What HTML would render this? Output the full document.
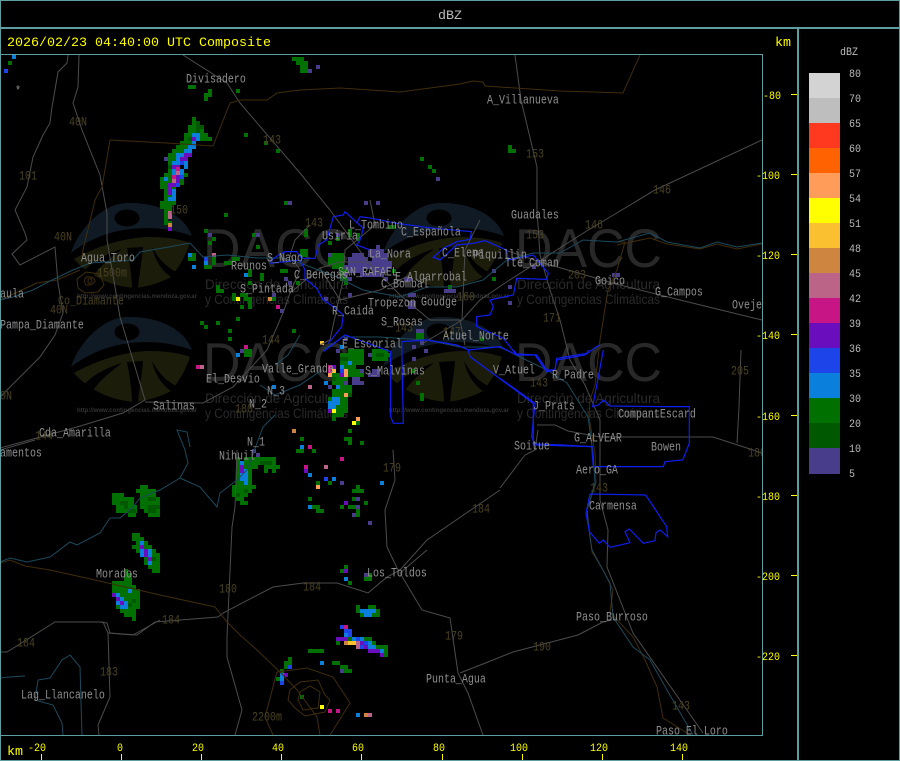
<!DOCTYPE html>
<html><head><meta charset="utf-8"><title>dBZ</title>
<style>
html,body{margin:0;padding:0;background:#000;width:900px;height:761px;overflow:hidden}
svg{display:block}
text{font-family:"Liberation Mono",monospace;font-size:10px}
.l text,.n text{transform-box:fill-box;transform-origin:0 80%;transform:scaleY(1.25)}
.a text,.k text{transform-box:fill-box;transform-origin:0 80%;transform:scaleY(1.1)}
.l text{fill:#8e8e8e}
.n text{fill:#4a4222}
.a text{fill:#ffff00}
.t{fill:#ffff00;font-size:13.33px}
.k text{fill:#bbb}
.s{fill:#bbb;font-size:13.33px}
.w{font-family:"Liberation Sans",sans-serif}
.r path{fill:none;stroke-width:4;shape-rendering:crispEdges}
.g{fill:none;stroke:#4c4c4c;stroke-width:1}
.b{fill:none;stroke:#3f2d0c;stroke-width:1}
.v{fill:none;stroke:#1c4a5c;stroke-width:1}
.u{fill:none;stroke:#0f1ef0}
</style></head><body>
<svg width="900" height="761" viewBox="0 0 900 761" xmlns="http://www.w3.org/2000/svg">
<defs>
<clipPath id="m"><rect x="1" y="55" width="761" height="680"/></clipPath>
<g id="logo">
<path d="M71 367C80 340 105 317 127 317C160 316 185 330 192 350C170 342 150 341 130 343C105 346 85 356 71 367Z" fill="#0f1a24"/>
<ellipse cx="127" cy="332" rx="12.5" ry="8.5" fill="#000"/>
<path d="M74 373C100 358 130 351 150 351C165 351 180 353 190 357C185 372 178 382 171 391C158 398 145 401 135 402C120 401 105 397 90 387C83 382 78 378 74 373Z" fill="#1c1c0b"/>
<path d="M122 363C105 368 90 377 83 386L92 392C98 382 110 372 122 363ZM127 362C130 378 132 392 132 402L138 402C139 390 142 375 143 361ZM152 361C155 375 162 385 171 391L176 386C165 380 158 372 152 361Z" fill="#000"/>
<text x="203" y="381" class="w" style="font-size:55px" textLength="147" lengthAdjust="spacingAndGlyphs" fill="#282828">DACC</text>
<text x="205" y="403" class="w" style="font-size:14px" textLength="143" lengthAdjust="spacingAndGlyphs" fill="#2a2a2a">Dirección de Agricultura</text>
<text x="205" y="418" class="w" style="font-size:14px" textLength="143" lengthAdjust="spacingAndGlyphs" fill="#2a2a2a">y Contingencias Climáticas</text>
<text x="77" y="412" class="w" style="font-size:6px;font-weight:bold" textLength="120" lengthAdjust="spacingAndGlyphs" fill="#333">http://www.contingencias.mendoza.gov.ar</text>
</g>
</defs>
<rect width="900" height="761" fill="#000"/>
<g clip-path="url(#m)">
<use href="#logo"/>
<use href="#logo" x="312"/>
<use href="#logo" y="-114"/>
<use href="#logo" x="312" y="-114"/>

<!-- radar -->
<g class="r">
<path stroke="#007000" d="M292 59h12M296 63h12M300 67h8M300 71h8M8 63h4M188 87h8M208 91h4M204 95h8M204 99h4M236 91h4M244 135h4M264 143h4M276 151h4M284 203h4M224 215h4M204 231h4M212 239h4M208 243h4M252 235h4M256 247h4
M192 119h4M192 123h8M188 127h16M188 131h16M184 135h24M184 139h28M180 143h16M176 147h20M172 151h20M168 155h16M168 159h12M168 163h12M168 167h12M168 171h16M164 175h24M160 179h24M160 183h24M160 187h16M164 191h12M164 195h12M164 199h12M160 203h16M160 207h12M164 211h8M164 215h4M164 219h4M164 223h8
M192 255h4M188 259h8M204 267h8M212 259h4M212 263h4M224 263h8M232 259h8M248 271h4M248 275h4M260 275h4M260 279h4M280 271h8M248 283h4M216 287h4M216 291h8M232 295h4M232 299h4M240 295h8M244 299h8M248 303h4M248 307h4M240 307h4M272 299h4M200 323h4M204 327h4M216 323h4M236 319h4M228 331h4M228 339h4M292 331h4M244 351h8M244 355h8
M296 283h4M300 251h8M300 255h8M304 231h4M304 235h4M328 243h4M336 239h4M348 231h4M348 235h4M356 235h4M356 239h4M388 227h8M328 255h16M328 259h16M328 263h16M332 267h12M340 271h8M340 275h8M340 279h8M344 283h4M392 271h4M448 287h4M492 279h4M416 335h8M416 339h8M416 383h4M420 395h4M420 399h4M412 371h4M480 339h4M508 147h4M508 151h8M420 159h4M428 167h4M432 171h4
M348 351h16M340 355h24M344 359h20M372 351h16M372 355h18M372 359h16M340 363h24M340 367h16M348 371h16M332 375h32M332 379h16M332 383h12M340 387h12M332 391h20M332 395h20M328 399h20M328 403h20M336 407h12M336 411h12M332 415h12M332 419h4M356 423h4M348 431h4M344 439h8M348 443h4M360 443h4M300 439h4
M236 459h4M244 459h32M236 463h40M236 467h22M264 467h16M236 471h16M264 471h4M272 471h4M236 475h16M236 479h16M236 483h16M232 487h24M232 491h20M232 495h16M236 499h8M240 503h8
M112 495h12M112 499h22M112 503h22M116 507h21M116 511h21M128 515h8M140 487h8M136 491h20M140 495h16M140 499h20M140 503h20M140 507h20M144 511h16M148 515h12
M132 535h8M132 539h12M136 543h12M132 547h20M136 551h20M140 555h20M144 559h16M144 563h16M148 567h12M152 571h8
M124 571h4M124 575h8M124 579h8M112 583h20M112 587h24M112 591h28M116 595h24M116 599h24M116 603h24M116 607h24M120 611h16M124 615h12M132 619h4
M296 451h8M312 451h4M316 483h4M328 483h4M356 487h4M352 491h12M308 499h4M352 499h4M364 503h4M312 507h8M340 507h4M348 507h8M316 511h8M356 511h4M356 515h4M344 567h4M340 571h4M348 583h4M368 575h4M364 579h8
M356 607h4M368 607h8M356 611h4M376 611h4M360 615h4M372 615h8M348 639h4M364 639h8M336 643h4M372 643h4M376 647h12M384 651h4M384 655h4M308 651h16M332 663h8M340 667h8M344 671h8M288 659h4M284 663h8M284 667h4M280 671h4M276 679h4M300 697h4"/>
<path stroke="#005800" d="M196 123h4M196 127h8M196 131h4M188 139h4M168 167h4M340 375h8M344 395h8M120 503h8M124 507h4M148 499h8M148 507h12M148 511h8M244 491h4M260 463h12M128 511h8M132 601h4M128 605h4M340 359h8M376 355h8M356 379h4M332 379h4M308 651h0M348 663h0M148 559h8M236 495h4"/>
<path stroke="#483d8b" d="M316 67h4M308 71h4M164 159h4M288 203h4M208 235h4M256 235h4M272 295h4M280 311h4M240 351h4M284 279h4M288 283h4M364 203h4M376 203h4M336 235h4M328 255h4M376 247h4M368 251h16M352 255h12M368 255h20M348 259h20M372 259h16M348 263h44M344 267h48M348 271h16M372 271h16M360 275h24M348 279h4M384 279h4M404 279h8M344 275h4M348 295h4M324 299h4M444 291h12M408 295h8M408 303h8M408 307h8M492 271h4M508 287h4M508 303h4M532 267h4M612 275h8M436 179h4M416 331h8M420 343h4M412 347h4M424 351h4M412 359h4M336 351h4M344 339h4M368 355h4M360 371h4M372 371h8M368 375h12M372 379h0M352 379h8M344 383h4M352 383h12M328 387h4M340 367h0M252 451h4M256 455h4M340 483h4M356 499h4M356 507h4M352 515h4M368 523h4M364 575h4M340 671h4"/>
<path stroke="#0a80dc" d="M12 57h4M192 135h8M196 139h4M192 143h4M188 147h8M184 151h8M176 155h8M176 159h4M172 163h8M184 163h4M184 167h4M172 171h4M180 171h4M172 175h4M180 175h4M164 179h4M172 191h4M172 195h4M168 199h8M188 255h4M192 267h4M204 263h4M244 275h4M236 355h4M272 387h4M340 347h4M348 363h4M340 367h4M324 383h4M336 387h4M344 379h0M332 399h8M328 403h12M328 407h8M300 447h4M240 463h4M244 471h4M240 475h8M240 479h8M244 483h4M128 591h4M116 595h4M120 599h4M124 603h4M120 607h8M116 603h4M140 543h4M140 551h4M148 551h4M140 555h4M148 555h4M148 559h0M148 563h4M308 475h4M332 479h4M380 483h4M308 507h4M344 579h4M360 611h16M364 615h8M352 639h4M360 639h4M344 635h4M368 643h4M368 647h8M380 651h4M320 663h4M280 675h4M280 679h4M356 715h4"/>
<path stroke="#1c44e8" d="M4 71h4M180 163h4M180 177h4M204 259h4M176 185h4M340 371h4M324 479h4M340 627h4M344 631h8M348 635h4M356 639h4M364 643h4M360 647h4M288 667h4M280 683h4"/>
<path stroke="#6a0dbd" d="M192 139h4M184 155h8M180 159h8M172 167h8M172 185h4M168 185h4M168 189h4M168 193h4M176 177h4M176 181h4M168 229h4M332 367h4M340 375h4M328 411h4M240 467h4M240 471h4M140 547h4M144 551h4M144 555h4M148 559h4M112 595h4M116 599h4M120 603h4M304 471h4M344 503h4M344 571h4M336 639h12M360 643h4M364 647h4M368 651h12M380 655h4M284 675h4"/>
<path stroke="#c71585" d="M176 169h4M172 177h4M328 367h4M328 371h4M244 347h4M276 307h4M196 367h4M240 463h0M340 459h4M304 467h4M308 447h4M344 627h4M328 711h4M336 711h4"/>
<path stroke="#bc6488" d="M176 173h4M172 181h4M168 213h4M168 217h4M212 255h4M200 367h4M308 387h4M324 467h4M356 643h4M356 647h4M368 715h4"/>
<path stroke="#cd853f" d="M168 225h4M268 299h4M292 431h4M344 643h4M364 715h4"/>
<path stroke="#fac030" d="M320 343h4M332 371h4M348 643h8"/>
<path stroke="#ff9c5a" d="M328 375h4M344 371h4M344 375h4M344 395h4M356 419h4M316 487h4"/>
<path stroke="#ffff00" d="M236 299h4M332 411h4M352 423h4M320 707h4"/>
</g>

<!-- roads -->
<g class="g">
<path d="M68 55L67 63L58 72L52 107L50 123L43 135L33 157L27 187L15 210L25 233L27 240L12 254L20 265L55 247L58 283L63 313L55 335L40 357L15 382L0 397"/>
<path d="M79 55L78 87L73 103L82 130L100 175L107 213L107 240L115 287L120 317L145 400L123 413L77 427L0 448"/>
<path d="M145 402L203 403L233 387L267 350L283 313L290 293L320 268L340 262L368 262"/>
<path d="M183 55L227 83L240 103L300 173L330 210L368 262L400 295L430 320L460 320L465 345"/>
<path d="M515 55L521 100L537 167L537 210L540 255L550 290L560 320L570 360L585 385L600 420L600 500L608 530L607 567L633 633L703 733"/>
<path d="M762 140L655 190L585 232L505 283L480 300L462 320L420 345"/>
<path d="M505 250L540 262L620 285L680 300L762 320"/>
<path d="M537 425L555 425L568 431L600 437L713 437L750 449L762 453"/>
<path d="M741 350L739 407L737 443"/>
<path d="M500 488L525 455L535 450L538 430"/>
<path d="M427 550L400 573L422 610L450 618L458 673L468 693L483 735"/>
<path d="M460 673L488 662L513 652L578 635L603 622L612 620"/>
<path d="M100 622L107 623L110 633L137 635L155 622L218 617L223 613L273 587L303 583L337 583L368 593L387 577L400 570"/>
<path d="M237 450L235 507L232 527L227 637L227 657L242 710L235 735"/>
<path d="M393 450L395 480L385 510L387 547L398 570L400 570L427 540L500 490"/>
<path d="M0 652L7 652L55 622L103 622L108 633L110 697L98 725L99 735"/>
<path d="M108 633L133 635L160 620"/>
<path d="M35 440L0 450"/>
<path d="M290 293L300 270L290 255L295 240L310 225"/>
<path d="M320 268L340 300L380 290L410 275"/>
<path d="M370 200L375 225L345 250L343 280L330 340L320 345"/>
<path d="M462 320L465 250L480 220"/>
</g>

<!-- provincial/brown -->
<g class="b">
<path d="M110 140L167 143L213 146L230 103L240 100L267 100L277 93L300 90L340 88L400 92L460 84L473 81L483 82L485 86L560 91L593 92L623 93L640 55"/>
<path d="M110 140L102 187L95 200L83 250L82 257"/>
<path d="M0 300L37 283L57 280L80 270"/>
<path d="M77 279L86 272L100 274L104 285L98 292L85 293L78 288Z"/>
<path d="M86 277Q94 276 95 281Q92 286 86 285Q83 281 86 277ZM88 279Q92 278 92 281Q90 284 88 283Z"/>
<path d="M615 242L625 242L617 270L608 290L600 340L595 385L590 400L589 417L595 453L596 483L587 510L590 537L592 552L603 570L613 590L610 612L633 637L645 660L657 687L663 718L687 733"/>
<path d="M617 245L650 238L667 244L700 249L717 244L737 249L762 244"/>
<path d="M0 563L10 560L25 566L50 570L95 580L160 595L215 607L227 622L240 635L257 650L280 672L297 690L317 717L320 735"/>
<path d="M277 672L307 668L333 677L350 703L330 735M277 672L265 717L273 735"/>
<path d="M290 690L300 682L318 680L325 695L330 700L325 712L305 716L295 708L288 700Z"/>
<path d="M300 692L310 686L320 692L318 708L303 710L298 700Z"/>
</g>

<!-- rivers -->
<g class="v">
<path d="M0 300L13 297L33 290L50 281L73 270L90 263L133 260L140 252L163 248L190 243L203 257L227 255L257 258L283 258L300 263L337 277L363 290L400 297L427 287L457 287L483 280L507 260L533 253L560 253L583 240L617 242L650 233L667 242L700 248L717 242L737 247L762 243"/>
<path d="M323 350L343 337L380 337L427 340L460 347L500 347L520 357L547 370L567 383L588 417L593 453L595 483L587 510L590 537L592 550L610 583L613 617L633 647L650 660L667 690L693 735"/>
<path d="M0 562L10 558L27 562L50 557L70 542L77 545L100 533L110 518L120 518L133 507L140 498L160 490L180 478L188 463L185 450L177 430L187 432L190 447"/>
<path d="M180 478L200 487L217 507L220 493L237 480L247 470L263 427L275 415"/>
<path d="M0 678L10 677L25 676M70 655L80 667L82 735M70 655L62 660L50 678L38 680L35 700L53 705L62 723L63 735"/>
<path d="M260 385L275 395L300 385L322 370M300 335L288 355L275 365"/>
</g>

<!-- blue sectors -->
<g class="u" transform="translate(190 200) scale(.3333)" stroke-width="3.6">
<path d="M240 185L265 165L285 155L320 155L335 175L375 175L385 135L410 120L430 50L460 45L465 35L520 85L510 120L500 135L540 150"/>
<path d="M240 190L330 180L345 210L345 235L380 265L400 300L430 320L460 345L455 380L435 405L415 430"/>
</g>
<g class="u" transform="translate(300 200) scale(.3333)" stroke-width="3.6">
<path d="M170 70L180 50L215 55L290 70L400 85L515 95L510 118L470 125L430 145L400 172L420 180L470 135L520 130L555 122L620 150L625 180L650 175L700 165L745 220L740 238L650 235L640 285L570 300L580 320L570 345L530 350L530 380L610 415L650 465L710 465L740 510L765 510L770 480L855 465L890 440L900 435"/>
<path d="M70 455L135 405L272 455L272 650L280 670L310 670L305 425L380 420L470 435L505 450L510 470L700 610L700 735L880 740"/>
<path d="M505 450L600 440L650 465"/>
</g>
<g class="u" transform="translate(500 350) scale(.3333)" stroke-width="3.6">
<path d="M0 85L105 160L95 260L105 282L185 285L275 290L280 350L490 350L495 335L548 330L568 280L568 170L480 170L330 168L310 150L295 165L278 170L295 80L310 0M270 432L437 435L500 530L503 560L480 540L468 548L465 572L430 580L388 537L375 545L390 578L330 592L310 570L298 580L268 545L258 490L270 432M40 0L50 12L105 15L140 65L165 60L170 25L260 10L265 0"/>
</g>

<!-- olive numbers -->
<g class="n">
<text x="69" y="126">40N</text><text x="19" y="180">101</text><text x="263" y="144">143</text><text x="170" y="214">150</text><text x="54" y="241">40N</text><text x="50" y="314">40N</text><text x="0" y="400">0N</text><text x="305" y="227">143</text><text x="526" y="158">153</text><text x="526" y="239">153</text><text x="653" y="194">146</text><text x="585" y="229">146</text><text x="568" y="279">203</text><text x="543" y="322">171</text><text x="395" y="332">143</text><text x="443" y="336">147</text><text x="530" y="387">143</text><text x="457" y="301">160</text><text x="262" y="344">144</text><text x="235" y="413">180</text><text x="35" y="440">144</text><text x="383" y="472">179</text><text x="472" y="513">184</text><text x="590" y="492">143</text><text x="303" y="591">184</text><text x="219" y="593">180</text><text x="162" y="624">184</text><text x="17" y="647">184</text><text x="100" y="676">183</text><text x="445" y="640">179</text><text x="533" y="651">190</text><text x="672" y="710">143</text><text x="731" y="375">205</text><text x="748" y="457">180</text><text x="97" y="277">1500m</text><text x="252" y="721">2200m</text><text x="58" y="305">Co_Diamante</text>
</g>

<!-- labels -->
<g class="l">
<text x="186" y="83">Divisadero</text><text x="487" y="104">A_Villanueva</text><text x="511" y="219">Guadales</text><text x="349" y="229">L_Tombino</text><text x="322" y="240">Usiria</text><text x="401" y="236">C_Española</text><text x="369" y="258">La_Nora</text><text x="442" y="257">C_Elena</text><text x="473" y="259">Piquillin</text><text x="505" y="267">Tte_Coman</text><text x="81" y="262">Agua_Toro</text><text x="231" y="270">Reunos</text><text x="267" y="262">S_Nago</text><text x="240" y="293">S_Pintada</text><text x="294" y="279">C_Benegas</text><text x="338" y="276">SAN_RAFAEL</text><text x="395" y="281">E_Algarrobal</text><text x="381" y="288">C_Bombal</text><text x="595" y="285">Goico</text><text x="655" y="296">G_Campos</text><text x="732" y="309">Ovejeria</text><text x="421" y="306">Goudge</text><text x="368" y="307">Tropezon</text><text x="332" y="315">R_Caida</text><text x="381" y="326">S_Rosas</text><text x="443" y="340">Atuel_Norte</text><text x="342" y="348">E_Escorial</text><text x="262" y="373">Valle_Grande</text><text x="206" y="383">El_Desvio</text><text x="365" y="375">S_Malvinas</text><text x="493" y="374">V_Atuel</text><text x="552" y="379">R_Padre</text><text x="533" y="410">J_Prats</text><text x="618" y="418">CompantEscard</text><text x="574" y="442">G_ALVEAR</text><text x="651" y="451">Bowen</text><text x="514" y="450">Soitue</text><text x="576" y="474">Aero_GA</text><text x="589" y="510">Carmensa</text><text x="153" y="410">Salinas</text><text x="39" y="437">Cda_Amarilla</text><text x="0" y="457">amentos</text><text x="249" y="408">N_2</text><text x="267" y="395">N_3</text><text x="247" y="446">N_1</text><text x="219" y="460">Nihuil</text><text x="96" y="578">Morados</text><text x="367" y="577">Los_Toldos</text><text x="576" y="621">Paso_Burroso</text><text x="426" y="683">Punta_Agua</text><text x="21" y="699">Lag_Llancanelo</text><text x="656" y="735">Paso_El_Loro</text><text x="0" y="329">Pampa_Diamante</text><text x="0" y="298">aula</text><text x="15" y="95">*</text>
</g>
</g>

<!-- frames -->
<g fill="#5f9ea0" shape-rendering="crispEdges">
<rect width="900" height="1"/><rect y="760" width="900" height="1"/><rect width="1" height="761"/><rect x="899" width="1" height="761"/>
<rect y="27" width="900" height="2"/>
<rect x="797" y="28" width="2" height="733"/>
<rect y="54" width="763" height="1"/><rect y="735" width="763" height="1"/><rect x="762" y="54" width="1" height="682"/>
</g>

<!-- legend -->
<g shape-rendering="crispEdges">
<rect x="809" y="73" width="31" height="25" fill="#d3d3d3"/><rect x="809" y="98" width="31" height="25" fill="#bebebe"/><rect x="809" y="123" width="31" height="25" fill="#ff3820"/><rect x="809" y="148" width="31" height="25" fill="#ff6200"/><rect x="809" y="173" width="31" height="25" fill="#ff9c5a"/><rect x="809" y="198" width="31" height="25" fill="#ffff00"/><rect x="809" y="223" width="31" height="25" fill="#fac030"/><rect x="809" y="248" width="31" height="25" fill="#cd853f"/><rect x="809" y="273" width="31" height="25" fill="#bc6488"/><rect x="809" y="298" width="31" height="25" fill="#c71585"/><rect x="809" y="323" width="31" height="25" fill="#6a0dbd"/><rect x="809" y="348" width="31" height="25" fill="#1c44e8"/><rect x="809" y="373" width="31" height="25" fill="#0a80dc"/><rect x="809" y="398" width="31" height="25" fill="#007000"/><rect x="809" y="423" width="31" height="25" fill="#005800"/><rect x="809" y="448" width="31" height="26" fill="#483d8b"/>
</g>
<g class="k">
<text x="840" y="55">dBZ</text><text x="849" y="77">80</text><text x="849" y="102">70</text><text x="849" y="127">65</text><text x="849" y="152">60</text><text x="849" y="177">57</text><text x="849" y="202">54</text><text x="849" y="227">51</text><text x="849" y="252">48</text><text x="849" y="277">45</text><text x="849" y="302">42</text><text x="849" y="327">39</text><text x="849" y="352">36</text><text x="849" y="377">35</text><text x="849" y="402">30</text><text x="849" y="427">20</text><text x="849" y="452">10</text><text x="849" y="477">5</text>
</g>

<!-- header text -->
<text class="s" x="438" y="19">dBZ</text>
<text class="t" x="7" y="46">2026/02/23 04:40:00 UTC Composite</text>
<text class="t" x="775" y="46">km</text>
<text class="t" x="7" y="755">km</text>

<!-- axes -->
<g class="a">
<text x="763" y="99">-80</text><text x="756" y="179">-100</text><text x="756" y="259">-120</text><text x="756" y="339">-140</text><text x="756" y="420">-160</text><text x="756" y="500">-180</text><text x="756" y="580">-200</text><text x="756" y="660">-220</text>
<text x="28" y="751">-20</text><text x="117" y="751">0</text><text x="192" y="751">20</text><text x="272" y="751">40</text><text x="352" y="751">60</text><text x="433" y="751">80</text><text x="510" y="751">100</text><text x="590" y="751">120</text><text x="670" y="751">140</text>
</g>
<g fill="#ffff00" shape-rendering="crispEdges">
<rect x="791" y="94" width="6" height="1"/><rect x="791" y="174" width="6" height="1"/><rect x="791" y="254" width="6" height="1"/><rect x="791" y="334" width="6" height="1"/><rect x="791" y="415" width="6" height="1"/><rect x="791" y="495" width="6" height="1"/><rect x="791" y="575" width="6" height="1"/><rect x="791" y="655" width="6" height="1"/>
<rect x="41" y="754" width="1" height="6"/><rect x="121" y="754" width="1" height="6"/><rect x="201" y="754" width="1" height="6"/><rect x="281" y="754" width="1" height="6"/><rect x="361" y="754" width="1" height="6"/><rect x="442" y="754" width="1" height="6"/><rect x="522" y="754" width="1" height="6"/><rect x="602" y="754" width="1" height="6"/><rect x="682" y="754" width="1" height="6"/>
</g>
</svg>
</body></html>
